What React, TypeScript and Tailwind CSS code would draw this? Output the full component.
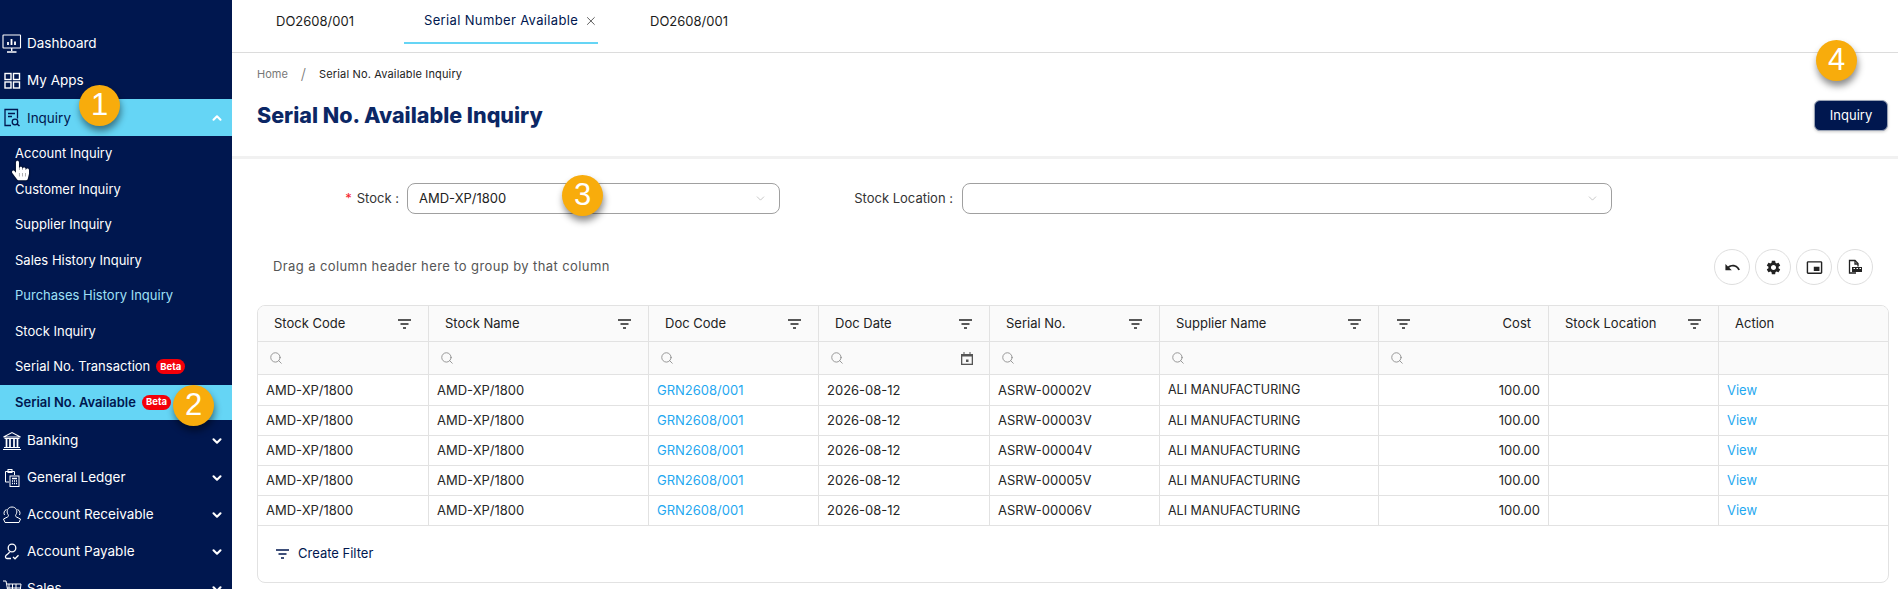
import { ReactNode } from "react";
import { ChevronDown, ChevronUp, Search, X } from "lucide-react";
import { MdUndo, MdSettings, MdPictureInPictureAlt } from "react-icons/md";
import { FaHandPointer } from "react-icons/fa";

const font = "font-['Inter','Liberation_Sans',sans-serif]";

const IconMonitor = () => (
  <svg width="20" height="20" viewBox="0 0 20 20" fill="none" stroke="currentColor" strokeWidth="1.1">
    <rect x="1" y="1" width="17.5" height="13" rx="0.5" />
    <path d="M9.7 14v3M5 18h9.5" strokeWidth="1.4" />
    <path d="M6 11V8M9.5 11V5M13 11V7.5" strokeWidth="1.8" />
  </svg>
);
const IconApps = () => (
  <svg width="20" height="20" viewBox="0 0 20 20" fill="none" stroke="currentColor" strokeWidth="1.4">
    <rect x="3" y="2.5" width="6" height="6" />
    <rect x="11.5" y="2.5" width="6" height="6" />
    <rect x="3" y="11" width="6" height="6" />
    <rect x="11.5" y="11" width="6" height="6" />
  </svg>
);
const IconInquiry = () => (
  <svg width="20" height="20" viewBox="0 0 20 20" fill="none" stroke="currentColor" strokeWidth="1.3">
    <path d="M9 17.5H3V1.5h12.5v9" />
    <path d="M6 5.5h7M6 8.5h4" />
    <circle cx="13" cy="14" r="2.8" />
    <path d="M15 16l2.5 2" strokeWidth="1.6" />
  </svg>
);
const IconBank = () => (
  <svg width="20" height="20" viewBox="0 0 20 20" fill="none" stroke="currentColor" strokeWidth="1.1">
    <path d="M1.5 6 10 1.5 18.5 6zM2.5 7.5h15M1 18.5h18M2 16.5h16" />
    <path d="M4.5 8v8M8 8v8M12 8v8M15.5 8v8" strokeWidth="1.7" />
  </svg>
);
const IconLedger = () => (
  <svg width="20" height="20" viewBox="0 0 20 20" fill="none" stroke="currentColor" strokeWidth="1">
    <path d="M7 14H3.5V3.5h9V7" />
    <rect x="6" y="1.5" width="4" height="3" />
    <rect x="8" y="8" width="9" height="10.5" />
    <path d="M10 10.5h5M10 13h1M12 13h1M14 13h1M10 15.5h1M12 15.5h1M14 15.5h1" strokeWidth="1.3" />
  </svg>
);
const IconReceivable = () => (
  <svg width="20" height="20" viewBox="0 0 20 20" fill="none" stroke="currentColor" strokeWidth="1">
    <path d="M6 9.5c-2-3-.5-7.5 4-7.5s6 4.500 4 7.500c-.8 1.200-.5 2 .5 2.500l4 2-1.500 3.500h-14L1.500 14l4-2c1-.5 1.300-1.300.5-2.500z" />
    <path d="M4.500 4.500C2 5.500 1.500 8 2.500 10M15.500 4.500c2.500 1 3 3.500 2 5.500" />
  </svg>
);
const IconPayable = () => (
  <svg width="20" height="20" viewBox="0 0 20 20" fill="none" stroke="currentColor" strokeWidth="1.3">
    <circle cx="10" cy="6" r="3.800" />
    <path d="M7.500 10c-.5 1.500-2.500 2.500-3.500 3.500-1 1-.5 3 1 3h4M11 15l2 1.800 3.500-3.500" />
  </svg>
);
const IconCart = () => (
  <svg width="20" height="20" viewBox="0 0 20 20" fill="none" stroke="currentColor" strokeWidth="1">
    <path d="M1 2h3l2 11h12l1-8H5M7 5v8M10.500 5v8M14 5v8M5 9h14" />
  </svg>
);

const TopItem = ({ icon, label, chevron = false }: { icon: ReactNode; label: string; chevron?: boolean }) => (
  <div className="flex h-[37px] items-center pl-[2px] pr-[8px] text-white">
    <span className="w-[25px] shrink-0">{icon}</span>
    <span className="text-[13.500px]">{label}</span>
    {chevron && <ChevronDown size={14} strokeWidth={3.600} className="ml-auto text-white" />}
  </div>
);

const Beta = () => (
  <span className="ml-[6px] flex h-[15px] w-[29px] items-center justify-center rounded-full bg-[#f40009] text-[9.500px] font-bold text-white">
    Beta
  </span>
);

const SubItem = ({ label, className = "text-white", beta = false }: { label: string; className?: string; beta?: boolean }) => (
  <div className={`flex h-[35.500px] items-center pl-[15px] text-[13px] ${className}`}>
    {label}
    {beta && <Beta />}
  </div>
);

const Bubble = ({ n, className }: { n: number; className: string }) => (
  <div
    className={`absolute z-20 flex h-[41px] w-[41px] items-center justify-center rounded-full bg-[#f8ac0c] font-['Liberation_Sans',sans-serif] text-[31px] text-white shadow-[1px_5px_7px_rgba(0,0,0,0.45)] ${className}`}
  >
    {n}
  </div>
);

const Sidebar = () => (
  <aside className="relative h-full w-[232px] shrink-0 overflow-hidden bg-[#00174f] pt-[25px]">
    <TopItem icon={<IconMonitor />} label="Dashboard" />
    <TopItem icon={<IconApps />} label="My Apps" />
    <div className="flex h-[37px] items-center bg-[#65d5f5] pl-[2px] pr-[8px] text-[#00174f]">
      <span className="w-[25px] shrink-0">
        <IconInquiry />
      </span>
      <span className="pt-[1px] text-[13.500px]">Inquiry</span>
      <ChevronUp size={14} strokeWidth={3.600} className="ml-auto text-white" />
    </div>
    <SubItem label="Account Inquiry" />
    <SubItem label="Customer Inquiry" />
    <SubItem label="Supplier Inquiry" />
    <SubItem label="Sales History Inquiry" />
    <SubItem label="Purchases History Inquiry" className="text-[#9fe0f7]" />
    <SubItem label="Stock Inquiry" />
    <SubItem label="Serial No. Transaction" beta />
    <SubItem label="Serial No. Available" className="bg-[#65d5f5] font-semibold text-[#00174f]" beta />
    <div className="pt-[2px]">
      <TopItem icon={<IconBank />} label="Banking" chevron />
      <TopItem icon={<IconLedger />} label="General Ledger" chevron />
      <TopItem icon={<IconReceivable />} label="Account Receivable" chevron />
      <TopItem icon={<IconPayable />} label="Account Payable" chevron />
      <TopItem icon={<IconCart />} label="Sales" chevron />
    </div>
    <FaHandPointer className="absolute left-[12px] top-[159px] z-10 h-[23px] w-[17px] text-white drop-shadow-[0_0_1px_#000]" />
  </aside>
);

const Tabs = () => (
  <div className="flex h-[53px] border-b border-[#dcdcdc] pl-[44px] text-[13px]">
    <div className="flex h-[44px] w-[128px] items-center text-[#1c1c1c]">DO2608/001</div>
    <div className="flex h-[44px] w-[194px] items-center whitespace-nowrap border-b-2 border-[#65d5f5] pl-5 tracking-[0.35px] text-[#00174f]">
      Serial Number Available
      <X size={16} strokeWidth={1.500} className="ml-[6px] text-[#444]" />
    </div>
    <div className="ml-[52px] flex h-[44px] items-center text-[#1c1c1c]">DO2608/001</div>
  </div>
);

const PageHeader = () => (
  <div className="flex h-[106px] items-start justify-between border-b-[3px] border-[#f1f1f1] pl-[25px] pr-[10px]">
    <div>
      <div className="mt-[13px] flex h-[16px] items-center text-[11px]">
        <span className="text-[#777]">Home</span>
        <span className="mx-[13px] text-[15px] font-light text-[#777]">/</span>
        <span className="tracking-[0.15px] text-[#222]">Serial No. Available Inquiry</span>
      </div>
      <h1 className="mt-[19px] text-[21.500px] font-extrabold leading-[28px] text-[#0b2765]">Serial No. Available Inquiry</h1>
    </div>
    <button className="mt-[47px] h-[31px] w-[74px] rounded-md border border-[#9aa3b5] bg-[#00174f] text-[13px] text-white shadow-[0_1px_3px_rgba(0,0,0,0.2)]">
      Inquiry
    </button>
  </div>
);

const Select = ({ value, className }: { value?: string; className: string }) => (
  <div className={`flex h-[31px] items-center justify-between rounded-lg border border-[#a0a0a0] pl-[11px] pr-[12px] text-[13px] text-[#222] ${className}`}>
    <span>{value}</span>
    <ChevronDown size={13} strokeWidth={1} className="text-[#999]" />
  </div>
);

const FilterRow = () => (
  <div className="flex items-center pt-[24px] text-[13px] text-[#333]">
    <div className="w-[175px] pr-[8px] text-right">
      <span className="mr-[5px] text-[#f5222d]">*</span>Stock :
    </div>
    <Select value="AMD-XP/1800" className="w-[373px]" />
    <div className="w-[182px] pr-[9px] text-right">Stock Location :</div>
    <Select className="w-[650px]" />
  </div>
);

const IconExport = () => (
  <svg width="16" height="16" viewBox="0 0 16 16" fill="none" stroke="#222" strokeWidth="1.300">
    <path d="M9 14H2.500V1.500H8l3 3v3" />
    <path d="M8 1.500V5h3" />
    <rect x="5" y="8" width="10" height="5" fill="#222" stroke="none" />
    <path d="M6.500 9.500h1.500M9.500 9.500h1.500M12.500 9.500h1.500" stroke="#fff" strokeWidth="1" />
  </svg>
);

const RoundButton = ({ children }: { children: ReactNode }) => (
  <div className="flex h-[36px] w-[36px] items-center justify-center rounded-full border border-[#dedede] text-[#222]">
    {children}
  </div>
);

const Toolbar = () => (
  <div className="flex items-center justify-between pl-[41px] pr-[25px] pt-[35px]">
    <span className="text-[13px] tracking-[0.4px] text-[#555]">Drag a column header here to group by that column</span>
    <div className="flex gap-[5px]">
      <RoundButton>
        <MdUndo size={17} />
      </RoundButton>
      <RoundButton>
        <MdSettings size={17} />
      </RoundButton>
      <RoundButton>
        <MdPictureInPictureAlt size={17} />
      </RoundButton>
      <RoundButton>
        <IconExport />
      </RoundButton>
    </div>
  </div>
);

const FilterLines = ({ className = "text-[#222]" }: { className?: string }) => (
  <svg width="13" height="10" viewBox="0 0 13 10" className={`shrink-0 ${className}`} fill="none" stroke="currentColor" strokeWidth="1.400">
    <path d="M0 1h13M2.500 5h8M5 9h3" />
  </svg>
);

const IconCalendar = () => (
  <svg width="12" height="13" viewBox="0 0 12 13" className="shrink-0">
    <path d="M0 2h2.500V0h1v2h5V0h1v2H12v11H0z" fill="#555" />
    <rect x="1.300" y="4.500" width="9.400" height="7.200" fill="#fafafa" />
    <rect x="5" y="7.500" width="2.500" height="2.500" fill="#555" />
  </svg>
);

const grid = "grid grid-cols-[170px_220px_170px_171px_170px_219px_170px_170px_1fr]";
const cell = "border-l border-[#e2e2e2] first:border-l-0";

const columns = ["Stock Code", "Stock Name", "Doc Code", "Doc Date", "Serial No.", "Supplier Name", "Cost", "Stock Location", "Action"];

const rows = ["00002V", "00003V", "00004V", "00005V", "00006V"];

const HeaderCell = ({ label }: { label: string }) => {
  if (label === "Cost") {
    return (
      <div className={`${cell} flex items-center justify-between pl-[18px] pr-[17px]`}>
        <FilterLines />
        <span>{label}</span>
      </div>
    );
  }
  return (
    <div className={`${cell} flex items-center justify-between pl-[16px] pr-[17px]`}>
      <span>{label}</span>
      {label !== "Action" && <FilterLines />}
    </div>
  );
};

const DataTable = () => (
  <div className="ml-[25px] mr-[9px] mt-[20px] h-[278px] overflow-hidden rounded-lg border border-[#e2e2e2] text-[13px]">
    <div className={`${grid} h-[36px] border-b border-[#e2e2e2] bg-[#fafafa] text-[#222]`}>
      {columns.map((c) => (
        <HeaderCell key={c} label={c} />
      ))}
    </div>
    <div className={`${grid} h-[33px] border-b border-[#e2e2e2] bg-[#fafafa]`}>
      {columns.map((c, i) => (
        <div key={c} className={`${cell} flex items-center justify-between pl-[11px] pr-[16px]`}>
          {i < 7 && <Search size={14} strokeWidth={1.500} className="text-[#8c8c8c]" />}
          {c === "Doc Date" && <IconCalendar />}
        </div>
      ))}
    </div>
    {rows.map((serial, i) => (
      <div key={serial} className={`${grid} ${i === 0 ? "h-[31px]" : "h-[30px]"} border-b border-[#e2e2e2] text-[#262626]`}>
        <div className={`${cell} flex items-center pl-[8px] pt-[1px]`}>AMD-XP/1800</div>
        <div className={`${cell} flex items-center pl-[8px] pt-[1px]`}>AMD-XP/1800</div>
        <div className={`${cell} flex items-center pl-[8px] pt-[1px] text-[#1fa8f0]`}>GRN2608/001</div>
        <div className={`${cell} flex items-center pl-[8px] pt-[1px]`}>2026-08-12</div>
        <div className={`${cell} flex items-center pl-[8px] pt-[1px]`}>ASRW-{serial}</div>
        <div className={`${cell} flex items-center pl-[8px] pt-[1px] text-[12.500px]`}>ALI MANUFACTURING</div>
        <div className={`${cell} flex items-center justify-end pr-[8px] pt-[1px]`}>100.00</div>
        <div className={cell} />
        <div className={`${cell} flex items-center pl-[8px] pt-[1px] text-[#1fa8f0]`}>View</div>
      </div>
    ))}
    <div className="flex h-[55px] items-center gap-[9px] pl-[18px] text-[#00174f]">
      <FilterLines className="text-[#00174f]" />
      Create Filter
    </div>
  </div>
);

export default function App() {
  return (
    <div className={`relative flex h-[589px] w-full overflow-hidden bg-white ${font}`}>
      <Sidebar />
      <main className="min-w-0 flex-1">
        <Tabs />
        <PageHeader />
        <FilterRow />
        <Toolbar />
        <DataTable />
      </main>
      <Bubble n={1} className="left-[79px] top-[85px]" />
      <Bubble n={2} className="left-[173px] top-[385px]" />
      <Bubble n={3} className="left-[562px] top-[175px]" />
      <Bubble n={4} className="left-[1816px] top-[40px]" />
    </div>
  );
}
